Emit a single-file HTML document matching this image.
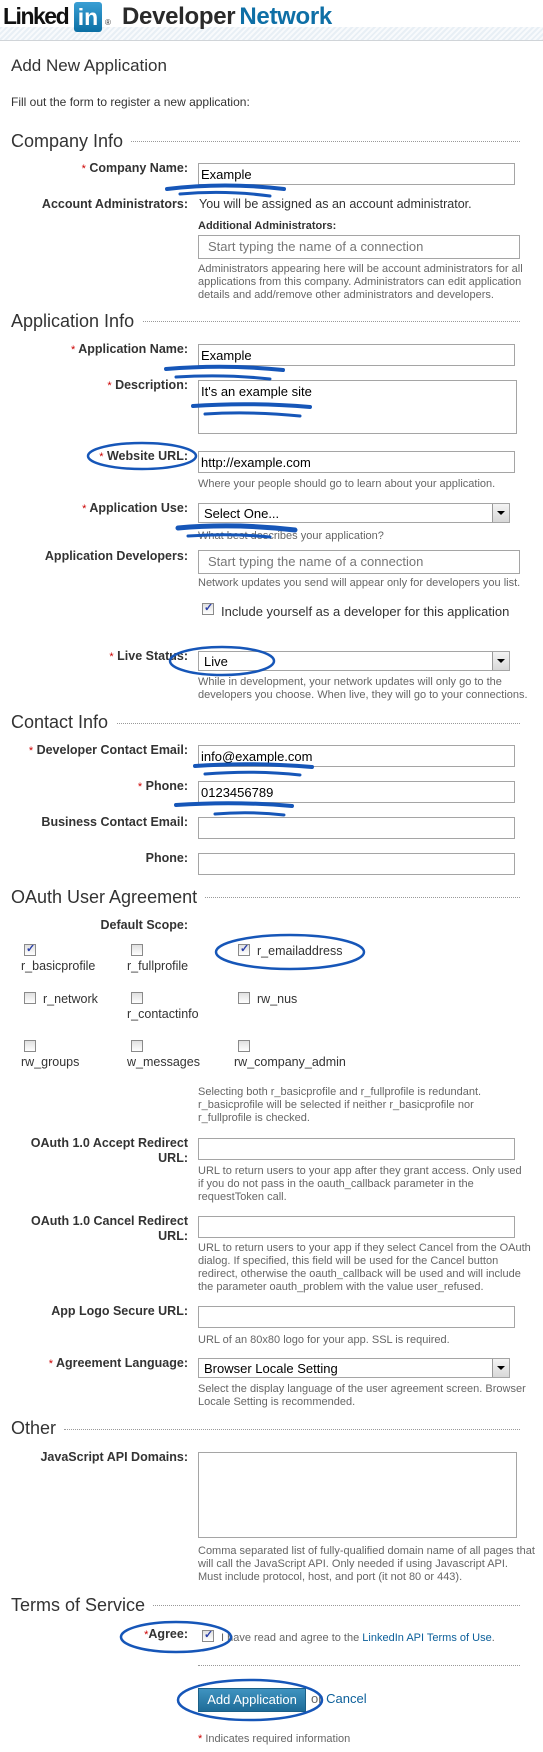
<!DOCTYPE html>
<html><head><meta charset="utf-8">
<style>
*{margin:0;padding:0;box-sizing:border-box}
body{width:543px;height:1752px;position:relative;background:#fff;font-family:"Liberation Sans",Arial,sans-serif;color:#333;overflow:hidden}
.a{position:absolute;white-space:nowrap}
.hd{position:absolute;left:0;top:0;width:543px;height:41px;background:#fff;border-bottom:2px solid #d0d4d8}
.band{position:absolute;left:0;top:27px;width:543px;height:13px;background:repeating-linear-gradient(135deg,#e8eff5 0 2px,#f8fafc 2px 4px)}
.h2{position:absolute;left:11px;font-size:18px;color:#333;background:#fff;padding-right:8px;white-space:nowrap}
.dot{position:absolute;height:0;border-top:1px dotted #999}
.lb{position:absolute;right:355px;font-size:12.5px;font-weight:bold;color:#333;text-align:right;white-space:nowrap;line-height:15px}
.lb i{font-style:normal;font-weight:normal;color:#c00;font-size:11px}
.in{position:absolute;left:198px;width:317px;height:22px;border:1px solid #a5a5a5;font-size:13px;padding:3px 2px;color:#000;white-space:nowrap;background:#fff}
.ph{color:#777;padding-left:7px}
.sel{position:absolute;left:198px;width:312px;height:20px;border:1px solid #a5a5a5;font-size:13px;padding:2px 5px;color:#000;background:#fff}
.sel:after{content:"";position:absolute;right:0;top:0;width:16px;height:18px;background:linear-gradient(#f4f4f4,#d8d8d8);border-left:1px solid #999}
.sel b{position:absolute;right:4px;top:7px;z-index:2;width:0;height:0;border-left:4px solid transparent;border-right:4px solid transparent;border-top:4px solid #000}
.hp{position:absolute;left:198px;font-size:11px;color:#666;line-height:13px;white-space:nowrap}
.cb{position:absolute;width:12px;height:12px;border:1px solid #8a8a8a;background:linear-gradient(#e0e0e0,#fff)}
.cb.c:after{content:"✓";position:absolute;left:1px;top:-3px;font-size:11px;color:#2a3fa8;font-weight:bold}
.sc{position:absolute;font-size:12.5px;color:#333;white-space:nowrap}
svg{position:absolute;left:0;top:0}
</style></head><body>
<div class="hd"><div class="band"></div></div>
<div class="a" style="left:3px;top:3px;font-size:23px;font-weight:bold;color:#111;letter-spacing:-1.5px">Linked</div>
<div class="a" style="left:74px;top:2px;width:28px;height:30px;background:linear-gradient(#3a9fd4,#0b6fa4);border-radius:3px;color:#fff;font-size:23px;font-weight:bold;text-align:center;line-height:30px">in</div>
<div class="a" style="left:105px;top:18px;font-size:8px;color:#333">®</div>
<div class="a" style="left:122px;top:3px;font-size:24px;font-weight:bold;color:#2a2a2a;letter-spacing:-0.3px">Developer<span style="color:#0e6fa6;margin-left:4px">Network</span></div>

<div class="a" style="left:11px;top:56px;font-size:17px">Add New Application</div>
<div class="a" style="left:11px;top:95px;font-size:12px">Fill out the form to register a new application:</div>

<div class="dot" style="left:120px;width:400px;top:141px"></div>
<div class="h2" style="top:131px">Company Info</div>
<div class="lb" style="top:161px"><i>*</i> Company Name:</div>
<div class="in" style="top:163px">Example</div>
<div class="lb" style="top:197px">Account Administrators:</div>
<div class="a" style="left:199px;top:197px;font-size:12.5px">You will be assigned as an account administrator.</div>
<div class="a" style="left:198px;top:220px;font-size:11px;font-weight:bold">Additional Administrators:</div>
<div class="in" style="top:235px;width:322px;height:24px"><span class="ph">Start typing the name of a connection</span></div>
<div class="hp" style="top:263px">Administrators appearing here will be account administrators for all<br>applications from this company. Administrators can edit application<br>details and add/remove other administrators and developers.</div>

<div class="dot" style="left:135px;width:385px;top:321px"></div>
<div class="h2" style="top:311px">Application Info</div>
<div class="lb" style="top:342px"><i>*</i> Application Name:</div>
<div class="in" style="top:344px">Example</div>
<div class="lb" style="top:378px"><i>*</i> Description:</div>
<div class="in" style="top:380px;width:319px;height:54px">It's an example site</div>
<div class="lb" style="top:449px"><i>*</i> Website URL:</div>
<div class="in" style="top:451px">http://example.com</div>
<div class="hp" style="top:478px">Where your people should go to learn about your application.</div>
<div class="lb" style="top:501px"><i>*</i> Application Use:</div>
<div class="sel" style="top:503px">Select One...<b></b></div>
<div class="hp" style="top:530px">What best describes your application?</div>
<div class="lb" style="top:549px">Application Developers:</div>
<div class="in" style="top:550px;width:322px;height:24px"><span class="ph">Start typing the name of a connection</span></div>
<div class="hp" style="top:577px">Network updates you send will appear only for developers you list.</div>
<div class="cb c" style="left:202px;top:603px"></div>
<div class="a" style="left:221px;top:604px;font-size:13px">Include yourself as a developer for this application</div>
<div class="lb" style="top:649px"><i>*</i> Live Status:</div>
<div class="sel" style="top:651px">Live<b></b></div>
<div class="hp" style="top:676px">While in development, your network updates will only go to the<br>developers you choose. When live, they will go to your connections.</div>

<div class="dot" style="left:112px;width:408px;top:723px"></div>
<div class="h2" style="top:712px">Contact Info</div>
<div class="lb" style="top:743px"><i>*</i> Developer Contact Email:</div>
<div class="in" style="top:745px">info@example.com</div>
<div class="lb" style="top:779px"><i>*</i> Phone:</div>
<div class="in" style="top:781px">0123456789</div>
<div class="lb" style="top:815px">Business Contact Email:</div>
<div class="in" style="top:817px"></div>
<div class="lb" style="top:851px">Phone:</div>
<div class="in" style="top:853px"></div>

<div class="dot" style="left:196px;width:324px;top:897px"></div>
<div class="h2" style="top:887px">OAuth User Agreement</div>
<div class="lb" style="top:918px">Default Scope:</div>
<div class="cb c" style="left:24px;top:944px"></div><div class="sc" style="left:21px;top:959px">r_basicprofile</div>
<div class="cb" style="left:131px;top:944px"></div><div class="sc" style="left:127px;top:959px">r_fullprofile</div>
<div class="cb c" style="left:238px;top:944px"></div><div class="sc" style="left:257px;top:944px">r_emailaddress</div>
<div class="cb" style="left:24px;top:992px"></div><div class="sc" style="left:43px;top:992px">r_network</div>
<div class="cb" style="left:131px;top:992px"></div><div class="sc" style="left:127px;top:1007px">r_contactinfo</div>
<div class="cb" style="left:238px;top:992px"></div><div class="sc" style="left:257px;top:992px">rw_nus</div>
<div class="cb" style="left:24px;top:1040px"></div><div class="sc" style="left:21px;top:1055px">rw_groups</div>
<div class="cb" style="left:131px;top:1040px"></div><div class="sc" style="left:127px;top:1055px">w_messages</div>
<div class="cb" style="left:238px;top:1040px"></div><div class="sc" style="left:234px;top:1055px">rw_company_admin</div>
<div class="hp" style="top:1086px">Selecting both r_basicprofile and r_fullprofile is redundant.<br>r_basicprofile will be selected if neither r_basicprofile nor<br>r_fullprofile is checked.</div>

<div class="lb" style="top:1136px">OAuth 1.0 Accept Redirect<br>URL:</div>
<div class="in" style="top:1138px"></div>
<div class="hp" style="top:1165px">URL to return users to your app after they grant access. Only used<br>if you do not pass in the oauth_callback parameter in the<br>requestToken call.</div>
<div class="lb" style="top:1214px">OAuth 1.0 Cancel Redirect<br>URL:</div>
<div class="in" style="top:1216px"></div>
<div class="hp" style="top:1242px">URL to return users to your app if they select Cancel from the OAuth<br>dialog. If specified, this field will be used for the Cancel button<br>redirect, otherwise the oauth_callback will be used and will include<br>the parameter oauth_problem with the value user_refused.</div>
<div class="lb" style="top:1304px">App Logo Secure URL:</div>
<div class="in" style="top:1306px"></div>
<div class="hp" style="top:1334px">URL of an 80x80 logo for your app. SSL is required.</div>
<div class="lb" style="top:1356px"><i>*</i> Agreement Language:</div>
<div class="sel" style="top:1358px">Browser Locale Setting<b></b></div>
<div class="hp" style="top:1383px">Select the display language of the user agreement screen. Browser<br>Locale Setting is recommended.</div>

<div class="dot" style="left:64px;width:456px;top:1429px"></div>
<div class="h2" style="top:1418px">Other</div>
<div class="lb" style="top:1450px">JavaScript API Domains:</div>
<div class="in" style="top:1452px;width:319px;height:86px"></div>
<div class="hp" style="top:1545px">Comma separated list of fully-qualified domain name of all pages that<br>will call the JavaScript API. Only needed if using Javascript API.<br>Must include protocol, host, and port (it not 80 or 443).</div>

<div class="dot" style="left:150px;width:370px;top:1605px"></div>
<div class="h2" style="top:1595px">Terms of Service</div>
<div class="lb" style="top:1627px"><i>*</i>Agree:</div>
<div class="cb c" style="left:202px;top:1630px"></div>
<div class="a" style="left:221px;top:1632px;font-size:11px;color:#666">I have read and agree to the <span style="color:#0b5f9a">LinkedIn API Terms of Use</span>.</div>
<div class="dot" style="left:198px;width:322px;top:1665px"></div>
<div class="a" style="left:198px;top:1688px;width:108px;height:24px;background:linear-gradient(#3f93c0,#1f6c98);border:1px solid #1b5f86;color:#fff;font-size:13px;text-align:center;line-height:22px">Add Application</div>
<div class="a" style="left:311px;top:1691px;font-size:13px;color:#666">or <span style="color:#0b5f9a">Cancel</span></div>
<div class="a" style="left:198px;top:1733px;font-size:11px;color:#666"><span style="color:#c00">*</span> Indicates required information</div>

<svg width="543" height="1752" fill="none" stroke="#1656b8" stroke-linecap="round">
<path d="M167 189 Q225 182 284 189" stroke-width="4"/><path d="M180 194 Q225 190 270 196" stroke-width="3"/>
<path d="M166 369 Q225 364 283 370" stroke-width="4"/><path d="M176 377 Q225 374 270 379" stroke-width="3"/>
<path d="M193 406 Q250 402 310 407" stroke-width="4"/><path d="M205 414 Q250 411 300 416" stroke-width="3"/>
<ellipse cx="142" cy="456" rx="54" ry="13" stroke-width="2.5"/>
<path d="M178 528 Q235 523 295 530" stroke-width="5"/><path d="M188 536 Q230 533 270 537" stroke-width="3"/>
<ellipse cx="222" cy="661" rx="52" ry="14" stroke-width="2.5"/>
<path d="M195 766 Q250 762 312 767" stroke-width="4"/><path d="M205 774 Q255 770 300 775" stroke-width="3"/>
<path d="M176 805 Q235 801 292 806" stroke-width="4"/><path d="M215 814 Q250 811 284 815" stroke-width="3"/>
<ellipse cx="290" cy="952" rx="74" ry="17" stroke-width="2.5"/>
<ellipse cx="176" cy="1637" rx="55" ry="15" stroke-width="2.5"/>
<ellipse cx="250" cy="1700" rx="72" ry="20" stroke-width="2.5"/>
</svg>
</body></html>
